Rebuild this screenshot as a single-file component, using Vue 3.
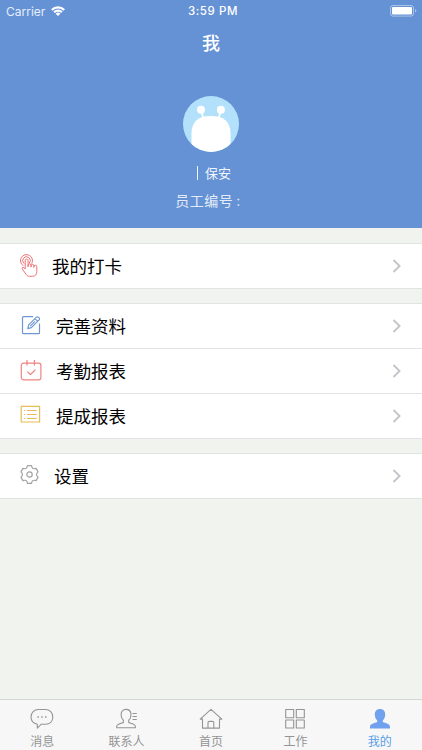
<script setup>
import { ref } from "vue";

const groups = [
  [{ icon: "touch", title: "我的打卡" }],
  [
    { icon: "edit", title: "完善资料" },
    { icon: "calendar", title: "考勤报表" },
    { icon: "list", title: "提成报表" },
  ],
  [{ icon: "gear", title: "设置" }],
];

const tabs = [
  { id: "message", title: "消息" },
  { id: "contacts", title: "联系人" },
  { id: "home", title: "首页" },
  { id: "work", title: "工作" },
  { id: "mine", title: "我的" },
];

const activeTab = ref("mine");
</script>

<template>
  <div class="page">
    <header class="header">
      <div class="status">
        <div class="status__left">
          <span class="status__carrier">Carrier</span>
          <svg class="status__wifi" viewBox="0 0 14 10">
            <path d="M0 3.200a9.900 9.900 0 0 1 14 0L12.400 4.800a7.600 7.600 0 0 0-10.800 0z" />
            <path d="M2.300 5.500a6.600 6.600 0 0 1 9.400 0L10.100 7.100a4.400 4.400 0 0 0-6.200 0z" />
            <path d="M4.600 7.800a3.400 3.400 0 0 1 4.800 0L7 10z" />
          </svg>
        </div>
        <div class="status__time">3:59 PM</div>
        <div class="status__right">
          <svg class="status__battery" viewBox="0 0 27 12">
            <rect x="0.5" y="0.5" width="23" height="10.600" rx="2.400" fill="none" stroke="#fff" stroke-opacity="0.45" />
            <rect x="2" y="2" width="20" height="7.600" rx="1" fill="#fff" />
            <path d="M25 4v3.600q1.400-.5 1.400-1.800T25 4z" fill="#fff" fill-opacity="0.45" />
          </svg>
        </div>
      </div>
      <h1 class="header__title">我</h1>
      <svg class="avatar" viewBox="0 0 56 56">
        <defs>
          <clipPath id="avatar-clip"><circle cx="28" cy="28" r="28" /></clipPath>
        </defs>
        <g clip-path="url(#avatar-clip)">
          <rect width="56" height="56" fill="#b3e1fb" />
          <path d="M18.200 14.500L20.800 24M37.800 14.500L35.200 24" stroke="#fff" stroke-width="1.700" />
          <circle cx="18" cy="13.700" r="4" fill="#fff" />
          <circle cx="37.900" cy="13.700" r="4" fill="#fff" />
          <path d="M8.500 56V37.500C8.500 25.500 15.500 20 28 20s19.500 5.500 19.500 17.500V56z" fill="#fff" />
        </g>
      </svg>
      <div class="header__role"><i class="header__bar" />保安</div>
      <div class="header__number">员工编号<span class="header__colon">:</span></div>
    </header>

    <main class="menu">
      <section v-for="(group, index) in groups" :key="index" class="menu__group">
        <div v-for="item in group" :key="item.icon" class="menu__item">
          <svg class="menu__icon" :class="'menu__icon--' + item.icon" viewBox="0 0 24 24">
            <g v-if="item.icon === 'touch'">
              <path d="M4.500 11.800a6 6 0 1 1 8.200-2.200" />
              <path d="M5.100 9.500a3.800 3.800 0 1 1 5.300-.5" />
              <path d="M6.200 15V6.600a1.450 1.450 0 0 1 2.900 0v6.200M9.100 12.800v-1.600a1.450 1.450 0 0 1 2.900 0v2M12 13v-1.200a1.450 1.450 0 0 1 2.900 0v1.700M14.900 13.300v-.6a1.450 1.450 0 0 1 2.900 0v5.100c0 2.800-1.600 4.500-4.400 4.500h-2.900c-1.600 0-2.600-.7-3.400-1.900L3.300 15c-.7-1.200.6-2.200 1.600-1.300l1.300 1.300" />
            </g>
            <g v-else-if="item.icon === 'edit'">
              <path d="M14.200 2.700H4.500a1 1 0 0 0-1 1v15a1 1 0 0 0 1 1h15a1 1 0 0 0 1-1V9.600" />
              <path d="M8.800 14.600l.9-3.700 7.700-7.700a1.400 1.400 0 0 1 2 0l.7.7a1.400 1.400 0 0 1 0 2l-7.700 7.700zM16 4.700l2.600 2.600M11.200 12.200l4.800-4.800" />
            </g>
            <g v-else-if="item.icon === 'calendar'">
              <rect x="2.300" y="4.200" width="19.600" height="16.600" rx="2.200" />
              <path d="M8 1v5.400M15.400 1v5.400M8.300 12.600l3.200 2.900 5-4.900" />
            </g>
            <g v-else-if="item.icon === 'list'">
              <rect x="2.200" y="2.400" width="18.400" height="15.600" />
              <path d="M5 6.500h1.300M5 10.500h1.300M5 14.500h1.300M8 6.500h9.700M8 10.500h9.700M8 14.500h9.700" />
            </g>
            <g v-else>
              <path d="M8.500 1.700H12.500Q13.200 5.800 17.100 4.400L19.100 7.900Q15.900 10.500 19.100 13.100L17.100 16.600Q13.200 15.200 12.500 19.300H8.500Q7.800 15.200 3.900 16.600L1.900 13.100Q5.100 10.500 1.900 7.900L3.900 4.400Q7.800 5.800 8.500 1.700Z" />
              <circle cx="10.500" cy="10.500" r="2.700" />
            </g>
          </svg>
          <span class="menu__title" :class="'menu__title--' + item.icon">{{ item.title }}</span>
          <svg class="menu__arrow" viewBox="0 0 10 14">
            <path d="M1.500 1l6.100 6-6.100 6" />
          </svg>
        </div>
      </section>
    </main>

    <nav class="tabs">
      <div
        v-for="tab in tabs"
        :key="tab.id"
        class="tabs__item"
        :class="{ 'tabs__item--active': tab.id === activeTab }"
        @click="activeTab = tab.id"
      >
        <svg class="tabs__icon" viewBox="0 0 24 22">
          <g v-if="tab.id === 'message'">
            <path d="M7.300 16.200C3.300 15.500 1 12.700 1 9.100 1 4.600 4.200 1.500 8.500 1.500h7c4.300 0 7.300 3.100 7.300 7.500s-3 7.200-7.300 7.200h-4.200l-4 3.900z" />
            <path class="tabs__dots" d="M7.400 8.900h1.500M11.200 8.900h1.500M15 8.900h1.500" />
          </g>
          <g v-else-if="tab.id === 'contacts'">
            <path d="M11 1.400c3.100 0 5 2.100 5 5.200 0 2.500-.8 4.500-2.300 5.700v2.200c2.700 1.200 6.700 1.600 6.700 4.100v1.200H1.700v-1.200c0-2.500 4-2.900 6.700-4.100v-2.200C6.900 11.100 6.100 9.100 6.100 6.600c0-3.100 1.800-5.200 4.900-5.200z" />
            <path d="M17.500 5.500h4.300M17.500 8.500h4.300M17.500 11.500h4.300" />
          </g>
          <g v-else-if="tab.id === 'home'">
            <path d="M1.200 11.100L12 1.300l10.800 9.800h-2.300v9H3.500v-9z" />
            <path d="M9 20v-5.300q0-1.300 1.300-1.300h3.200q1.300 0 1.300 1.300V20" />
          </g>
          <g v-else-if="tab.id === 'work'">
            <rect x="2.700" y="1.500" width="8" height="8.300" />
            <rect x="13.300" y="1.500" width="8" height="8.300" />
            <rect x="2.700" y="12" width="8" height="8" />
            <rect x="13.300" y="12" width="8" height="8" />
          </g>
          <path
            v-else
            class="tabs__solid"
            d="M12 1c3.300 0 5.200 2.200 5.200 5.500 0 2.500-.9 4.700-2.400 6v1.600c2.700 1.300 7.200 1.500 7.200 4.700v1.600H2v-1.600c0-3.200 4.500-3.400 7.200-4.700v-1.600c-1.500-1.300-2.400-3.500-2.400-6C6.800 3.200 8.700 1 12 1z"
          />
        </svg>
        <span class="tabs__title">{{ tab.title }}</span>
      </div>
    </nav>
  </div>
</template>

<style>
body {
  margin: 0;
}
</style>

<style scoped>
.page {
  display: flex;
  flex-direction: column;
  height: 750px;
  overflow: hidden;
  background: #f1f3ef;
  font-family: Inter, "Noto Sans CJK SC", sans-serif;
  color: #000;
}

.page svg {
  display: block;
  flex-shrink: 0;
}

.header {
  height: 228px;
  display: flex;
  flex-direction: column;
  align-items: center;
  flex-shrink: 0;
  background: #6492d5;
  color: #fff;
}

.status {
  width: 100%;
  height: 22px;
  display: grid;
  grid-template-columns: 1fr auto 1fr;
  align-items: center;
  box-sizing: border-box;
  padding: 0 5px 0 6px;
  font-size: 12px;
}

.status__left {
  display: flex;
  align-items: center;
  gap: 6px;
}

.status__carrier {
  color: #e6eefa;
  font-size: 12px;
}

.status__wifi {
  width: 14px;
  height: 10px;
  fill: #fff;
}

.status__time {
  margin-left: 3px;
  font-size: 11.5px;
  font-weight: 500;
  letter-spacing: 0.6px;
}

.status__right {
  display: flex;
  justify-content: flex-end;
}

.status__battery {
  width: 27px;
  height: 12px;
}

.header__title {
  margin: 9px 0 0;
  font-size: 18px;
  line-height: 26px;
  font-weight: 500;
}

.avatar {
  width: 56px;
  height: 56px;
  margin-top: 39px;
}

.header__role {
  display: flex;
  align-items: center;
  gap: 7px;
  margin: 11px 0 0 6px;
  font-size: 13px;
  line-height: 20px;
  color: #f0f5fc;
}

.header__bar {
  width: 1px;
  height: 14px;
  background: #f0f5fc;
}

.header__number {
  margin: 7px 0 0 -6px;
  font-size: 14px;
  line-height: 22px;
  letter-spacing: 0.5px;
  color: #e3ebf8;
}

.header__colon {
  margin-left: 3px;
}

.menu {
  flex: 1;
  display: flex;
  flex-direction: column;
  gap: 14px;
  padding-top: 15px;
}

.menu__group {
  background: #fff;
  border-bottom: 1px solid #e2e4e3;
}

.menu__item {
  height: 44px;
  display: flex;
  align-items: center;
  padding: 0 20px 0 19px;
  border-top: 1px solid #e2e4e3;
}

.menu__icon {
  width: 24px;
  height: 24px;
  fill: none;
  stroke-width: 1.2;
  stroke-linejoin: round;
}

.menu__icon--touch {
  stroke: #ee7376;
  stroke-width: 1;
}

.menu__icon--edit {
  stroke: #6f98d6;
}

.menu__icon--calendar {
  stroke: #ee8382;
}

.menu__icon--list {
  stroke: #e6bd58;
}

.menu__icon--gear {
  stroke: #a2a2a2;
}

.menu__title {
  flex: 1;
  margin-left: 13px;
  padding-top: 2px;
  font-size: 17.5px;
  line-height: 24px;
}

.menu__title--touch {
  margin-left: 9px;
}

.menu__title--gear {
  margin-left: 11px;
}

.menu__arrow {
  width: 10px;
  height: 14px;
  fill: none;
  stroke: #c4c4c8;
  stroke-width: 1.8;
}

.tabs {
  height: 50px;
  display: flex;
  flex-shrink: 0;
  border-top: 1px solid #d3d6d1;
  background: #f7f7f7;
}

.tabs__item {
  flex: 1;
  display: flex;
  flex-direction: column;
  align-items: center;
  padding: 8px 0 0;
  color: #949494;
}

.tabs__item--active {
  color: #579de9;
}

.tabs__icon {
  width: 24px;
  height: 22px;
  fill: none;
  stroke: #959595;
  stroke-width: 1.1;
  stroke-linejoin: round;
}

.tabs__dots {
  stroke-width: 1.5;
}

.tabs__solid {
  fill: #6fa1ee;
  stroke: none;
}

.tabs__title {
  margin-top: 4px;
  font-size: 12px;
  line-height: 16px;
}
</style>
